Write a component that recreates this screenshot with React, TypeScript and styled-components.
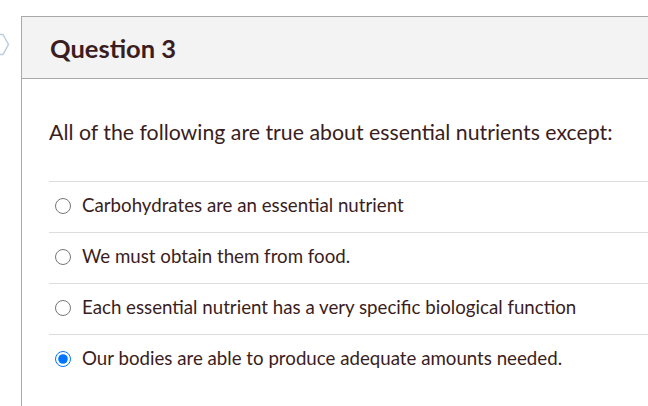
import React from "react";
import styled, { createGlobalStyle } from "styled-components";

const Global = createGlobalStyle`
  html, body { margin: 0; padding: 0; background: #ffffff; overflow: hidden; }
  body { font-family: Lato, "Noto Sans", sans-serif; color: #3a1d21; }
`;

const Page = styled.div`
  display: flex;
  width: 648px;
  height: 406px;
  padding-top: 16px;
  box-sizing: border-box;
  overflow: hidden;
`;

const Gutter = styled.div`
  flex: 0 0 21px;
  position: relative;
`;

const Flag = styled.svg`
  position: absolute;
  left: 0;
  top: 17px;
  display: block;
`;

const Card = styled.section`
  flex: 0 0 700px;
  border-left: 1px solid #a9a9a9;
  border-top: 1px solid #a9a9a9;
  height: 420px;
`;

const Header = styled.header`
  height: 61px;
  background: #f3f3f3;
  border-bottom: 1px solid #a9a9a9;
  display: flex;
  align-items: center;
  padding-left: 28px;
`;

const Title = styled.h2`
  margin: 0;
  font-family: Lato, sans-serif;
  font-weight: 700;
  font-size: 25.5px;
  line-height: 1;
  color: #3a1d21;
  padding-top: 2px;
`;

const Body = styled.div`
  padding: 0 0 0 27px;
`;

const Prompt = styled.p`
  margin: 0;
  height: 102px;
  display: flex;
  align-items: center;
  font-family: Lato, sans-serif;
  font-size: 21.3px;
  line-height: 1;
  color: #3a1d21;
  padding-top: 6px;
  box-sizing: border-box;
`;

const Answers = styled.div`
  display: flex;
  flex-direction: column;
`;

const Answer = styled.label`
  display: flex;
  align-items: center;
  height: 51px;
  border-top: 1px solid #dddddd;
  padding-left: 6px;
  padding-bottom: 3px;
  box-sizing: border-box;
  font-family: Lato, sans-serif;
  font-size: 18.7px;
  line-height: 1;
  color: #3a1d21;
`;

const Radio = styled.input`
  width: 16px;
  height: 16px;
  margin: 0 11px 0 0;
  flex: 0 0 16px;
`;

const answers = [
  "Carbohydrates are an essential nutrient",
  "We must obtain them from food.",
  "Each essential nutrient has a very specific biological function",
  "Our bodies are able to produce adequate amounts needed.",
];

export default function App() {
  return (
    <>
      <Global />
      <Page>
        <Gutter>
          <Flag width="12" height="24" viewBox="0 0 12 24">
            <path
              d="M-4 1.5 L3 1.5 L8.5 11.5 L3 21.5 L-4 21.5"
              fill="none"
              stroke="#b7cde0"
              strokeWidth="1.5"
              strokeLinejoin="round"
            />
          </Flag>
        </Gutter>
        <Card>
          <Header>
            <Title>Question 3</Title>
          </Header>
          <Body>
            <Prompt>All of the following are true about essential nutrients except:</Prompt>
            <Answers>
              {answers.map((a, i) => (
                <Answer key={i}>
                  <Radio type="radio" name="q3" defaultChecked={i === 3} />
                  {a}
                </Answer>
              ))}
            </Answers>
          </Body>
        </Card>
      </Page>
    </>
  );
}
